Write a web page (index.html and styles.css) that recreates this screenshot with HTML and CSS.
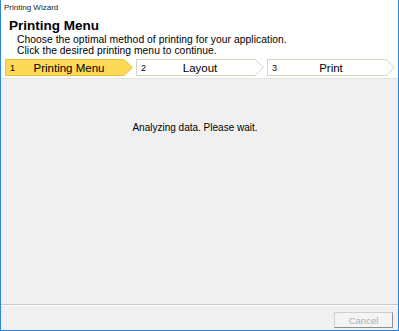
FILE: index.html
```html
<!DOCTYPE html>
<html lang="en">
<head>
    <meta charset="UTF-8">
    <title>Printing Wizard</title>
    <link rel="stylesheet" href="styles.css">
</head>
<body>
    <div class="window">
        <div class="header">
            <div class="caption">Printing Wizard</div>
            <h1>Printing Menu</h1>
            <p class="desc">Choose the optimal method of printing for your application.<br>Click the desired printing menu to continue.</p>
            <div class="steps">
                <div class="step active"><div class="step-inner"><span class="num">1</span><span class="label">Printing Menu</span></div></div>
                <div class="step"><div class="step-inner"><span class="num">2</span><span class="label">Layout</span></div></div>
                <div class="step"><div class="step-inner"><span class="num">3</span><span class="label">Print</span></div></div>
            </div>
        </div>
        <div class="content">
            <p class="status">Analyzing data. Please wait.</p>
        </div>
        <div class="footer">
            <button class="cancel-btn" disabled>Cancel</button>
        </div>
    </div>
</body>
</html>
```
FILE: styles.css
```css
body { margin: 0; font-family: "Liberation Sans", Arial, sans-serif; background: #f0f0f0; }
.window { width: 399px; height: 331px; box-sizing: border-box; border: 1px solid #2b88d8; border-top: none; display: flex; flex-direction: column; background: #f0f0f0; }
.header { background: white; padding: 2px 0 2px 3px; }
.caption { font-size: 8px; line-height: 12px; color: #222; }
h1 { margin: 3px 0 0 5px; font-size: 13.5px; line-height: 17px; font-weight: bold; color: #000; }
.desc { margin: 0 0 0 13px; font-size: 10.3px; line-height: 11px; color: #000; letter-spacing: 0.05px; }
.steps { display: flex; gap: 3px; margin-top: 3px; padding-left: 1px; }
.step { width: 128px; height: 17px; background: #d9d3c3; clip-path: polygon(0 0, calc(100% - 9px) 0, 100% 50%, calc(100% - 9px) 100%, 0 100%); padding: 1px; box-sizing: border-box; }
.step-inner { height: 100%; background: white; clip-path: polygon(0 0, calc(100% - 8px) 0, 100% 50%, calc(100% - 8px) 100%, 0 100%); display: flex; align-items: center; }
.step.active { background: #e6c13e; }
.step.active .step-inner { background: #fcd957; }
.num { font-size: 9px; width: 20px; padding-left: 4px; box-sizing: border-box; }
.label { flex: 1; text-align: center; font-size: 11.5px; padding-right: 20px; }
.content { flex: 1; border-top: 1px solid #e3e3e3; }
.status { margin: 43px 0 0; padding-right: 9px; text-align: center; font-size: 10px; color: #000; }
.footer { border-top: 1px solid #c8c8c8; box-shadow: inset 0 1px 0 white; height: 26px; display: flex; justify-content: flex-end; align-items: flex-start; padding: 7px 5px 0 0; box-sizing: border-box; }
.cancel-btn { width: 59px; height: 16px; padding: 0; font-family: inherit; font-size: 9.5px; color: #b0b0b0; background: #f4f4f4; border: 1px solid #cfcfcf; border-right-color: #8e8e8e; border-bottom-color: #8e8e8e; }
```
